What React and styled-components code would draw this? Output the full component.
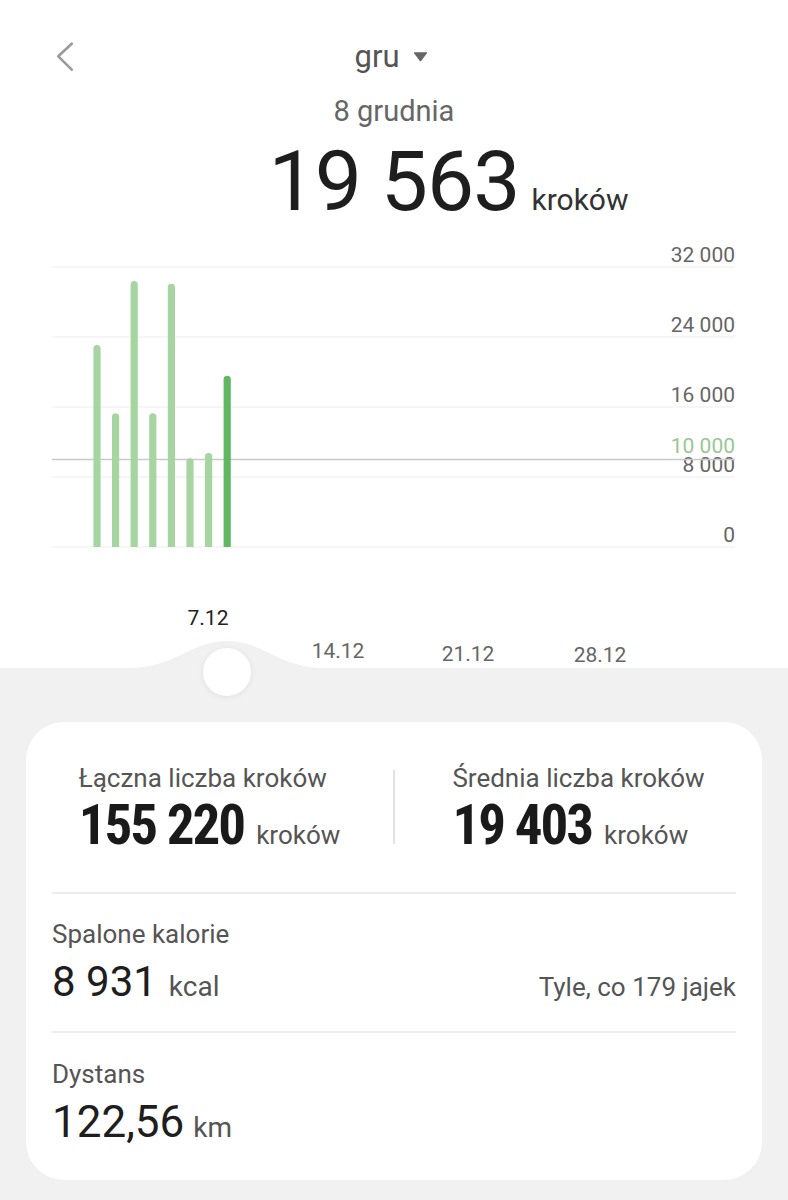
import styled, { createGlobalStyle } from "styled-components";

const GlobalStyle = createGlobalStyle`
  body {
    margin: 0;
    background: #fff;
    font-family: Roboto, "Noto Sans", sans-serif;
  }
`;

const Page = styled.div`
  width: 788px;
  min-height: 1200px;
  display: flex;
  flex-direction: column;
`;

const Header = styled.header`
  height: 230px;
  display: flex;
  flex-direction: column;
`;

const TopBar = styled.div`
  display: grid;
  grid-template-columns: 80px 1fr 80px;
  align-items: center;
  padding-top: 32px;
  height: 48px;
`;

const BackButton = styled.button`
  border: none;
  background: none;
  padding: 0 0 0 56px;
  display: flex;
  cursor: pointer;
`;

const Title = styled.div`
  display: flex;
  align-items: center;
  justify-content: center;
  gap: 13px;
  padding-right: 6px;
  font-size: 31px;
  color: #555;
`;

const DateLabel = styled.div`
  margin-top: 13px;
  text-align: center;
  font-size: 29px;
  line-height: 36px;
  color: #666;
`;

const ValueRow = styled.div`
  display: grid;
  grid-template-columns: 1fr auto 1fr;
  align-items: baseline;
  margin-top: 10px;
`;

const BigValue = styled.span`
  grid-column: 2;
  font-size: 84px;
  line-height: 86px;
  letter-spacing: -1px;
  color: #1e1e1e;
`;

const BigUnit = styled.span`
  justify-self: start;
  margin-left: 12px;
  font-size: 30px;
  color: #333;
`;

const ChartWrap = styled.div`
  position: relative;
  height: 438px;
  svg {
    display: block;
  }
`;

const Handle = styled.div`
  position: absolute;
  left: 203px;
  top: 418px;
  width: 48px;
  height: 48px;
  border-radius: 50%;
  background: #fff;
  box-shadow: 0 1px 6px rgba(0, 0, 0, 0.07);
`;

const GrayArea = styled.main`
  flex: 1;
  background: #f1f1f1;
  padding: 54px 26px 17px;
`;

const Card = styled.section`
  background: #fff;
  border-radius: 38px;
  padding-bottom: 33px;
`;

const StatsRow = styled.div`
  display: grid;
  grid-template-columns: 1fr 2px 1fr;
  padding: 41px 0 38px;
`;

const StatCol = styled.div`
  display: flex;
  justify-content: center;
`;

const VDivider = styled.div`
  width: 1.5px;
  height: 74px;
  margin-top: 7px;
  background: #e2e2e2;
`;

const HDivider = styled.hr`
  margin: 0 26px;
  border: none;
  height: 2px;
  background: #ececec;
`;

const Metric = styled.div`
  padding: ${p => (p.$first ? "25px 26px 24px" : "26px 26px 0")};
`;

const Label = styled.div`
  font-size: 26px;
  line-height: 30px;
  color: #555;
`;

const ValueLine = styled.div`
  display: flex;
  align-items: baseline;
  justify-content: space-between;
  margin-top: ${p => p.$gap || 8}px;
`;

const Value = styled.span`
  font-size: ${p => p.$size || 42}px;
  line-height: 50px;
  color: #1e1e1e;
`;

const StatValue = styled.span`
  font-family: "Roboto Condensed", "Liberation Sans Narrow", "DejaVu Sans Condensed", Roboto, sans-serif;
  font-weight: 700;
  font-size: 55px;
  line-height: 58px;
  letter-spacing: -2px;
  color: #1a1a1a;
`;

const Unit = styled.span`
  margin-left: ${p => p.$gap || 10}px;
  font-size: ${p => p.$size || 28}px;
  color: #555;
`;

const Note = styled.span`
  font-size: 26px;
  color: #555;
`;

const bars = [23100, 15300, 30400, 15300, 30100, 10150, 10750, 19563];
const ticks = [0, 8000, 16000, 24000, 32000];
const xLabels = [
  { t: "7.12", x: 208, y: 395, active: true },
  { t: "14.12", x: 338, y: 428 },
  { t: "21.12", x: 468, y: 431 },
  { t: "28.12", x: 600, y: 432 },
];

const yOf = v => 317 - (v / 8000) * 70;
const fmt = v => String(v).replace(/\B(?=(\d{3})+(?!\d))/g, " ");

const Chart = () => (
  <svg width="788" height="438" viewBox="0 0 788 438">
    <defs>
      <linearGradient id="sel" x1="0" y1="0" x2="0" y2="1">
        <stop offset="0" stopColor="#d6d6d6" stopOpacity="0" />
        <stop offset="0.1" stopColor="#d6d6d6" />
        <stop offset="0.7" stopColor="#e3e3e3" />
        <stop offset="1" stopColor="#e3e3e3" stopOpacity="0" />
      </linearGradient>
    </defs>
    {ticks.map(t => (
      <g key={t}>
        <line x1="52" x2="735" y1={yOf(t)} y2={yOf(t)} stroke="#ededed" strokeWidth="1.2" />
        <text x="735" y={yOf(t) - 5} textAnchor="end" fontSize="21" fill="#666" fontFamily="Roboto">
          {fmt(t)}
        </text>
      </g>
    ))}
    <line x1="52" x2="735" y1={yOf(10000)} y2={yOf(10000)} stroke="#c9c9c9" strokeWidth="1.3" />
    <text x="735" y={yOf(10000) - 7} textAnchor="end" fontSize="21" fill="#98c795" fontFamily="Roboto">
      10 000
    </text>
    <line x1="227" x2="227" y1="40" y2="362" stroke="url(#sel)" strokeWidth="1.2" />
    {bars.map((v, i) => {
      const x = 97 + i * 18.6;
      const sel = i === bars.length - 1;
      return (
        <path
          key={i}
          d={`M${x - 3.6} 317 V${yOf(v) + 3.6} a3.6 3.6 0 0 1 7.2 0 V317 Z`}
          fill={sel ? "#62b862" : "#a6d5a2"}
        />
      );
    })}
    {xLabels.map(l => (
      <text
        key={l.t}
        x={l.x}
        y={l.y}
        textAnchor="middle"
        fontSize="21"
        fill={l.active ? "#222" : "#666"}
        fontFamily="Roboto"
      >
        {l.t}
      </text>
    ))}
    <path d="M128 438 C176 438 190 411 227 411 C264 411 278 438 326 438 Z" fill="#f1f1f1" />
  </svg>
);

const App = () => (
  <Page>
    <GlobalStyle />
    <Header>
      <TopBar>
        <BackButton aria-label="Wstecz">
          <svg width="18" height="30" viewBox="0 0 18 30">
            <polyline
              points="15.7,2.7 2.3,15.3 15.7,28.7"
              fill="none"
              stroke="#9a9a9a"
              strokeWidth="2.6"
              strokeLinecap="round"
              strokeLinejoin="round"
            />
          </svg>
        </BackButton>
        <Title>
          gru
          <svg width="15" height="11" viewBox="0 0 14 10">
            <path d="M1.5 1 H12.5 Q13.6 1 13 2 L7.8 9 Q7 10 6.2 9 L1 2 Q0.4 1 1.5 1 Z" fill="#666" />
          </svg>
        </Title>
      </TopBar>
      <DateLabel>8 grudnia</DateLabel>
      <ValueRow>
        <BigValue>19 563</BigValue>
        <BigUnit>kroków</BigUnit>
      </ValueRow>
    </Header>

    <ChartWrap>
      <Chart />
      <Handle />
    </ChartWrap>

    <GrayArea>
      <Card>
        <StatsRow>
          <StatCol>
            <div>
              <Label>Łączna liczba kroków</Label>
              <ValueLine $gap={3}>
                <span>
                  <StatValue>155 220</StatValue>
                  <Unit $size={26} $gap={12}>kroków</Unit>
                </span>
              </ValueLine>
            </div>
          </StatCol>
          <VDivider />
          <StatCol>
            <div>
              <Label>Średnia liczba kroków</Label>
              <ValueLine $gap={3}>
                <span>
                  <StatValue>19 403</StatValue>
                  <Unit $size={26} $gap={12}>kroków</Unit>
                </span>
              </ValueLine>
            </div>
          </StatCol>
        </StatsRow>
        <HDivider />
        <Metric $first>
          <Label>Spalone kalorie</Label>
          <ValueLine>
            <span>
              <Value>8 931</Value>
              <Unit $gap={12}>kcal</Unit>
            </span>
            <Note>Tyle, co 179 jajek</Note>
          </ValueLine>
        </Metric>
        <HDivider />
        <Metric>
          <Label>Dystans</Label>
          <ValueLine>
            <span>
              <Value $size={44}>122,56</Value>
              <Unit $gap={9}>km</Unit>
            </span>
          </ValueLine>
        </Metric>
      </Card>
    </GrayArea>
  </Page>
);

export default App;
